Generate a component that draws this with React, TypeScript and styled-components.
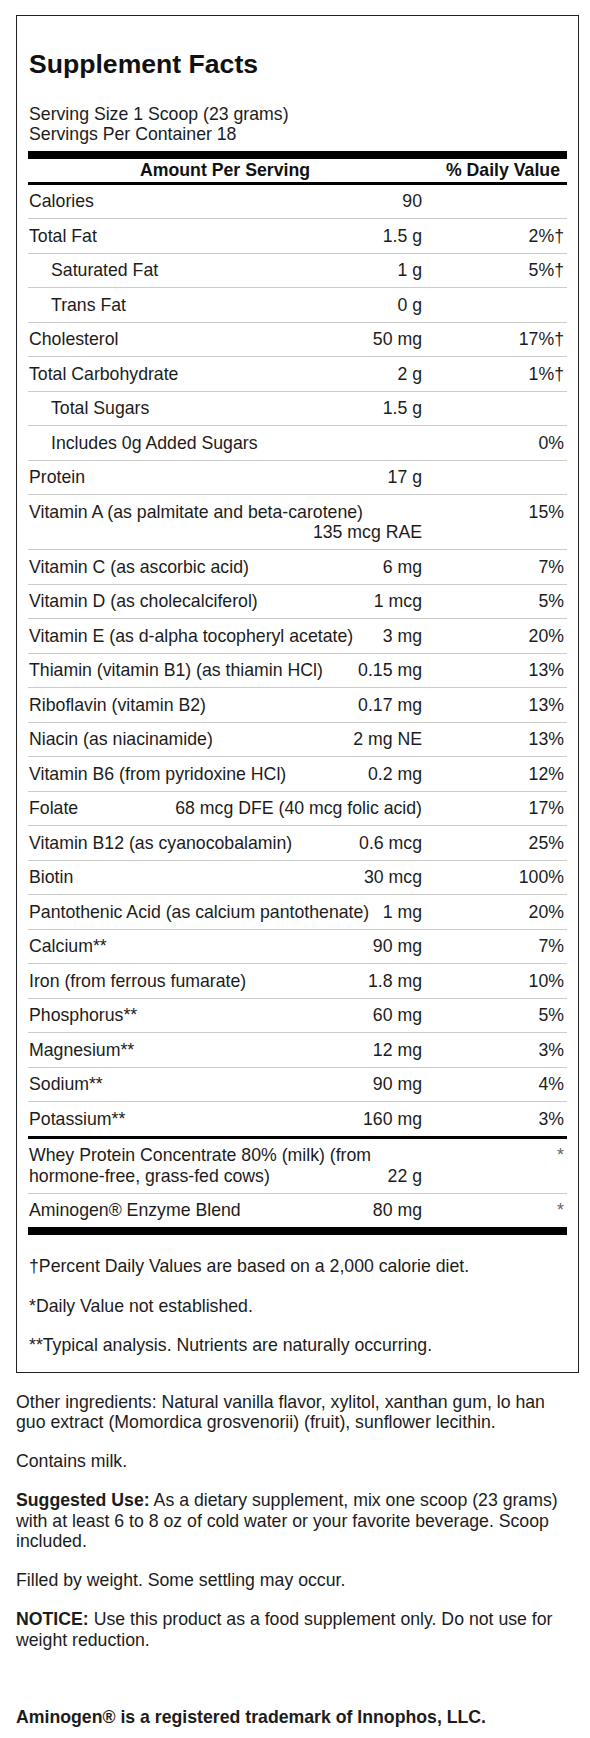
import styled, { createGlobalStyle } from "styled-components";

const GlobalStyle = createGlobalStyle`
  body {
    margin: 0;
    background: #ffffff;
    color: #1c1c1c;
    font-family: "Liberation Sans", Arial, sans-serif;
    font-size: 17.7px;
    line-height: 20.4px;
  }
`;

const Page = styled.div`
  width: 563px;
  padding: 15px 11px 12px 16px;
`;

const FactsBox = styled.section`
  border: 1px solid #222222;
  padding: 0 11px 17px 11px;
`;

const Title = styled.h1`
  margin: 33px 0 24px 1px;
  font-size: 26.6px;
  line-height: 30.6px;
  font-weight: 700;
  color: #111111;
`;

const ServingLine = styled.div`
  padding-left: 1px;
`;

const Bar = styled.div<{ $thick: number; $gap?: number }>`
  height: ${({ $thick }) => $thick}px;
  margin-top: ${({ $gap }) => $gap ?? 0}px;
  background: #000000;
`;

const HeaderRow = styled.div`
  display: grid;
  grid-template-columns: 394px 1fr;
  padding: 1px 0;
  border-bottom: 3px solid #000000;
  font-weight: 700;
  color: #111111;
`;

const HeaderName = styled.div`
  text-align: center;
`;

const HeaderDv = styled.div`
  text-align: right;
  padding-right: 7px;
`;

const Row = styled.div<{ $last?: boolean; $final?: boolean }>`
  display: grid;
  grid-template-columns: 394px 1fr;
  padding: 6.55px 0;
  border-bottom: ${({ $last, $final }) =>
    $final ? "none" : $last ? "3px solid #000000" : "1px solid #cccccc"};
`;

const NameCell = styled.div<{ $indent?: boolean }>`
  padding-left: ${({ $indent }) => ($indent ? 23 : 1)}px;
`;

const Amount = styled.span`
  float: right;
  padding-left: 6px;
`;

const Dv = styled.div<{ $muted?: boolean }>`
  text-align: right;
  padding-right: 3px;
  color: ${({ $muted }) => ($muted ? "#666666" : "inherit")};
`;

const Footnotes = styled.div`
  display: flex;
  flex-direction: column;
  gap: 19px;
  padding: 21px 0 0 1px;
`;

const Footnote = styled.p`
  margin: 0;
`;

const Paragraph = styled.p<{ $spaced?: boolean }>`
  margin: ${({ $spaced }) => ($spaced ? "57px" : "18.6px")} 0 0;
`;

const Strong = styled.strong`
  font-weight: 700;
`;

const Trademark = styled(Paragraph)`
  font-weight: 700;
`;

type Nutrient = {
  name: string;
  amount: string;
  dv?: string;
  indent?: boolean;
};

const nutrients: Nutrient[] = [
  { name: "Calories", amount: "90" },
  { name: "Total Fat", amount: "1.5 g", dv: "2%†" },
  { name: "Saturated Fat", amount: "1 g", dv: "5%†", indent: true },
  { name: "Trans Fat", amount: "0 g", indent: true },
  { name: "Cholesterol", amount: "50 mg", dv: "17%†" },
  { name: "Total Carbohydrate", amount: "2 g", dv: "1%†" },
  { name: "Total Sugars", amount: "1.5 g", indent: true },
  { name: "Includes 0g Added Sugars", amount: "", dv: "0%", indent: true },
  { name: "Protein", amount: "17 g" },
  { name: "Vitamin A (as palmitate and beta-carotene)", amount: "135 mcg RAE", dv: "15%" },
  { name: "Vitamin C (as ascorbic acid)", amount: "6 mg", dv: "7%" },
  { name: "Vitamin D (as cholecalciferol)", amount: "1 mcg", dv: "5%" },
  { name: "Vitamin E (as d-alpha tocopheryl acetate)", amount: "3 mg", dv: "20%" },
  { name: "Thiamin (vitamin B1) (as thiamin HCl)", amount: "0.15 mg", dv: "13%" },
  { name: "Riboflavin (vitamin B2)", amount: "0.17 mg", dv: "13%" },
  { name: "Niacin (as niacinamide)", amount: "2 mg NE", dv: "13%" },
  { name: "Vitamin B6 (from pyridoxine HCl)", amount: "0.2 mg", dv: "12%" },
  { name: "Folate", amount: "68 mcg DFE (40 mcg folic acid)", dv: "17%" },
  { name: "Vitamin B12 (as cyanocobalamin)", amount: "0.6 mcg", dv: "25%" },
  { name: "Biotin", amount: "30 mcg", dv: "100%" },
  { name: "Pantothenic Acid (as calcium pantothenate)", amount: "1 mg", dv: "20%" },
  { name: "Calcium**", amount: "90 mg", dv: "7%" },
  { name: "Iron (from ferrous fumarate)", amount: "1.8 mg", dv: "10%" },
  { name: "Phosphorus**", amount: "60 mg", dv: "5%" },
  { name: "Magnesium**", amount: "12 mg", dv: "3%" },
  { name: "Sodium**", amount: "90 mg", dv: "4%" },
  { name: "Potassium**", amount: "160 mg", dv: "3%" },
];

const blends: Nutrient[] = [
  {
    name: "Whey Protein Concentrate 80% (milk) (from hormone-free, grass-fed cows)",
    amount: "22 g",
    dv: "*",
  },
  { name: "Aminogen® Enzyme Blend", amount: "80 mg", dv: "*" },
];

export default function App() {
  return (
    <>
      <GlobalStyle />
      <Page>
        <FactsBox>
          <Title>Supplement Facts</Title>
          <ServingLine>Serving Size 1 Scoop (23 grams)</ServingLine>
          <ServingLine>Servings Per Container 18</ServingLine>
          <Bar $thick={8} $gap={7} />
          <HeaderRow>
            <HeaderName>Amount Per Serving</HeaderName>
            <HeaderDv>% Daily Value</HeaderDv>
          </HeaderRow>
          {nutrients.map((n, i) => (
            <Row key={n.name} $last={i === nutrients.length - 1}>
              <NameCell $indent={n.indent}>
                {n.name}
                {n.amount && <Amount>{n.amount}</Amount>}
              </NameCell>
              <Dv>{n.dv}</Dv>
            </Row>
          ))}
          {blends.map((n, i) => (
            <Row key={n.name} $final={i === blends.length - 1}>
              <NameCell>
                {n.name}
                <Amount>{n.amount}</Amount>
              </NameCell>
              <Dv $muted>{n.dv}</Dv>
            </Row>
          ))}
          <Bar $thick={8} />
          <Footnotes>
            <Footnote>†Percent Daily Values are based on a 2,000 calorie diet.</Footnote>
            <Footnote>*Daily Value not established.</Footnote>
            <Footnote>**Typical analysis. Nutrients are naturally occurring.</Footnote>
          </Footnotes>
        </FactsBox>
        <Paragraph>
          Other ingredients: Natural vanilla flavor, xylitol, xanthan gum, lo han guo
          extract (Momordica grosvenorii) (fruit), sunflower lecithin.
        </Paragraph>
        <Paragraph>Contains milk.</Paragraph>
        <Paragraph>
          <Strong>Suggested Use:</Strong> As a dietary supplement, mix one scoop (23 grams)
          with at least 6 to 8 oz of cold water or your favorite beverage. Scoop included.
        </Paragraph>
        <Paragraph>Filled by weight. Some settling may occur.</Paragraph>
        <Paragraph>
          <Strong>NOTICE:</Strong> Use this product as a food supplement only. Do not use for
          weight reduction.
        </Paragraph>
        <Trademark $spaced>Aminogen® is a registered trademark of Innophos, LLC.</Trademark>
      </Page>
    </>
  );
}
